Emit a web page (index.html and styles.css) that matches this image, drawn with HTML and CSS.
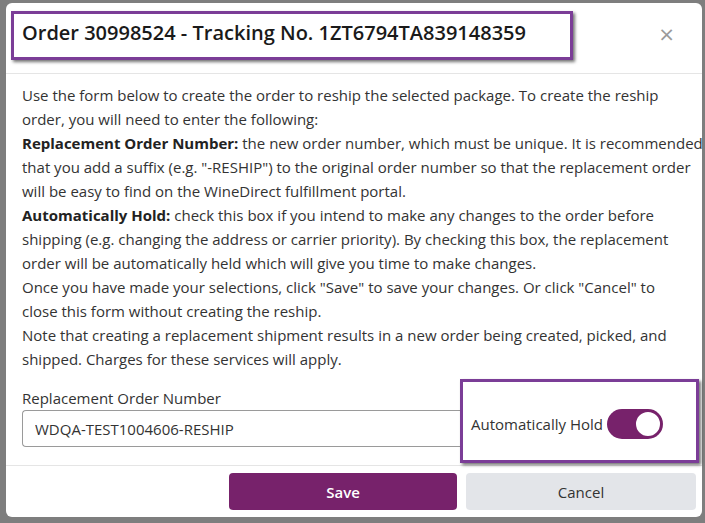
FILE: index.html
```html
<!DOCTYPE html>
<html lang="en">
<head>
    <meta charset="UTF-8">
    <meta name="viewport" content="width=device-width, initial-scale=1.0">
    <title>Reship Order</title>
    <link rel="stylesheet" href="styles.css">
</head>
<body>
    <div class="modal">
        <div class="modal-header">
            <h4 class="modal-title">Order 30998524 - Tracking No. 1ZT6794TA839148359</h4>
            <button class="close" type="button">&times;</button>
        </div>

        <div class="modal-body">
            <p>Use the form below to create the order to reship the selected package. To create the reship<br>order, you will need to enter the following:</p>
            <p><b>Replacement Order Number:</b> the new order number, which must be unique. It is recommended<br>that you add a suffix (e.g. "-RESHIP") to the original order number so that the replacement order<br>will be easy to find on the WineDirect fulfillment portal.</p>
            <p><b>Automatically Hold:</b> check this box if you intend to make any changes to the order before<br>shipping (e.g. changing the address or carrier priority). By checking this box, the replacement<br>order will be automatically held which will give you time to make changes.</p>
            <p>Once you have made your selections, click "Save" to save your changes. Or click "Cancel" to<br>close this form without creating the reship.</p>
            <p>Note that creating a replacement shipment results in a new order being created, picked, and<br>shipped. Charges for these services will apply.</p>

            <div class="form-row">
                <div class="field">
                    <label for="order-number">Replacement Order Number</label>
                    <input id="order-number" type="text" value="WDQA-TEST1004606-RESHIP">
                </div>
                <div class="hold">
                    <span>Automatically Hold</span>
                    <span class="switch on"><span class="knob"></span></span>
                </div>
            </div>
        </div>

        <div class="modal-footer">
            <button class="btn btn-save" type="button">Save</button>
            <button class="btn btn-cancel" type="button">Cancel</button>
        </div>
    </div>
</body>
</html>
```

FILE: styles.css
```css
/* page behind the dialog */
html, body {
    margin: 0;
    padding: 0;
}

body {
    background: #7e7e7e;
    font-family: "Open Sans", "Liberation Sans", sans-serif;
    color: #333;
    height: 523px;
    overflow: hidden;
}

.modal {
    margin: 3px 3px 0 6px;
    width: 696px;
    background: #fff;
    border-radius: 6px;
}

/* header with the highlighted title */
.modal-header {
    display: flex;
    align-items: flex-start;
    padding: 8px 27px 13px 5px;
    border-bottom: 1px solid #e5e5e5;
}

.modal-title {
    margin: 0;
    width: 540px;
    padding: 7px 8px 12px 8px;
    border: 3px solid #7b3d97;
    box-shadow: 2px 2px 3px rgba(0, 0, 0, 0.55);
    font-size: 20px;
    font-weight: 600;
    color: #1a1a1a;
    line-height: 24px;
}

.close {
    margin: 13px 0 0 auto;
    padding: 0;
    border: 0;
    background: none;
    font-family: "DejaVu Sans", sans-serif;
    font-size: 20px;
    line-height: 20px;
    color: #9a9a9a;
}

.modal-body {
    padding: 9px 16px 18px 16px;
    font-size: 15px;
    line-height: 24px;
}

/* lines break where the original copy breaks */
.modal-body p {
    margin: 0;
    white-space: nowrap;
}

.modal-body b {
    font-weight: 700;
    color: #222;
}

/* order number + hold switch */
.form-row {
    display: flex;
    margin-top: 17px;
}

.field {
    flex: 1;
}

.field label {
    display: block;
    line-height: 20px;
    margin-bottom: 2px;
}

.field input {
    box-sizing: border-box;
    width: 100%;
    height: 37px;
    padding: 0 12px;
    border: 1px solid #9a9a9a;
    border-right: 0;
    border-radius: 4px 0 0 4px;
    font-family: inherit;
    font-size: 15px;
    color: #333;
}

.hold {
    box-sizing: border-box;
    width: 239px;
    margin: -9px -13px -16px 0;
    padding: 6px 8px 0 8px;
    display: flex;
    align-items: center;
    gap: 4px;
    border: 3px solid #7b3d97;
    box-shadow: 2px 2px 3px rgba(0, 0, 0, 0.55);
    background: #fff;
}

.switch {
    position: relative;
    width: 56px;
    height: 30px;
    border-radius: 15px;
    background: #ccc;
}

.switch.on {
    background: #77226b;
}

.knob {
    position: absolute;
    top: 1px;
    left: 1px;
    width: 24px;
    height: 24px;
    border-radius: 50%;
    background: #fff;
    border: 2px solid #77226b;
}

.switch.on .knob {
    left: 27px;
}

.modal-footer {
    display: flex;
    justify-content: flex-end;
    gap: 9px;
    padding: 7px 6px 7px 6px;
    border-top: 1px solid #e5e5e5;
}

.btn {
    height: 37px;
    border: 0;
    border-radius: 4px;
    font-family: inherit;
    font-size: 15px;
}

.btn-save {
    width: 228px;
    background: #77226b;
    color: #fff;
    font-weight: 600;
}

.btn-cancel {
    width: 230px;
    background: #e3e5e9;
    color: #333;
}
```
